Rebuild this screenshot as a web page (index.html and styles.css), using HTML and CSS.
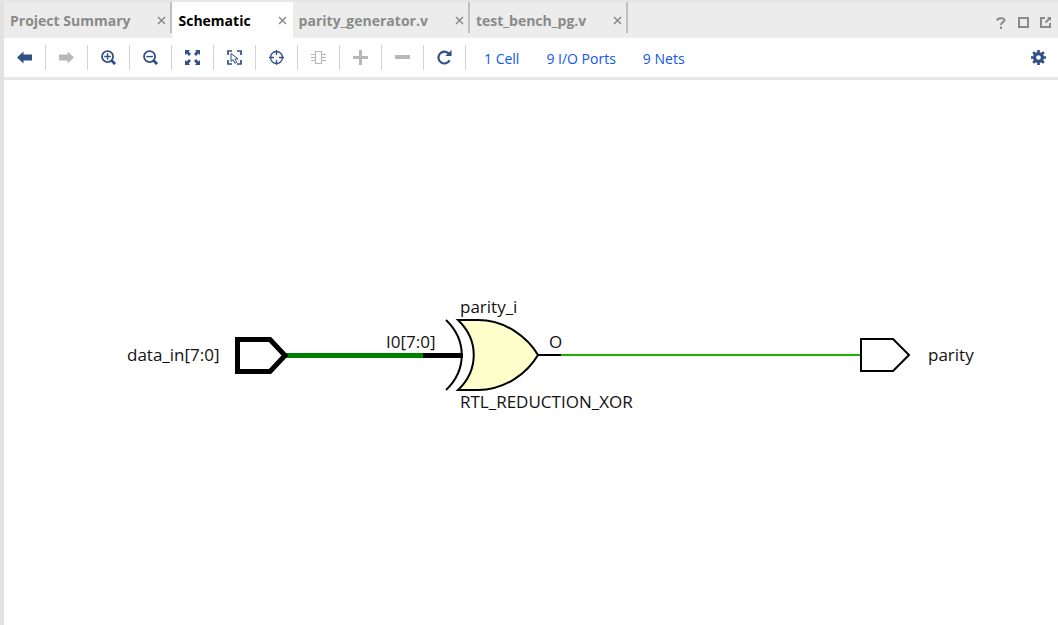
FILE: index.html
```html
<!DOCTYPE html>
<html lang="en">
<head>
<meta charset="utf-8">
<title>Schematic</title>
<link rel="stylesheet" href="styles.css">
</head>
<body>
<div class="panel">
  <header class="tabbar">
    <nav class="tabs">
      <div class="tab divided"><button class="tab-label">Project Summary</button><button class="close" aria-label="Close Project Summary"><svg width="9" height="9" viewBox="0 0 9 9"><path d="M1 1l7 7M8 1l-7 7"/></svg></button></div>
      <div class="tab active"><button class="tab-label">Schematic</button><button class="close" aria-label="Close Schematic"><svg width="9" height="9" viewBox="0 0 9 9"><path d="M1 1l7 7M8 1l-7 7"/></svg></button></div>
      <div class="tab divided"><button class="tab-label">parity_generator.v</button><button class="close" aria-label="Close parity_generator.v"><svg width="9" height="9" viewBox="0 0 9 9"><path d="M1 1l7 7M8 1l-7 7"/></svg></button></div>
      <div class="tab divided"><button class="tab-label">test_bench_pg.v</button><button class="close" aria-label="Close test_bench_pg.v"><svg width="9" height="9" viewBox="0 0 9 9"><path d="M1 1l7 7M8 1l-7 7"/></svg></button></div>
    </nav>
    <div class="window-actions">
      <button class="help" aria-label="Help"><svg width="10" height="12" viewBox="0 0 10 12"><path d="M1 3.500C1.500 .500 8.500 .300 8.500 3.300C8.500 5.300 5 5.200 5 8M5 9.500V12" fill="none" stroke="currentColor" stroke-width="2"/></svg></button>
      <button aria-label="Maximize"><svg width="12" height="12" viewBox="0 0 12 12"><path d="M1 1h9v9H1z" fill="none" stroke="currentColor" stroke-width="2"/></svg></button>
      <button aria-label="Float"><svg width="12" height="12" viewBox="0 0 12 12"><path d="M5 1H1v9h9V6" fill="none" stroke="currentColor" stroke-width="2"/><path d="M5.500 5.500l4-4" stroke="currentColor" stroke-width="2"/><path d="M7 0h4v4z" fill="currentColor"/></svg></button>
    </div>
  </header>
  <div class="toolbar">
    <button class="tool" aria-label="Back"><svg class="icon" viewBox="0 0 15 15"><path d="M0 7.500L6.500 1.500v3H15v6H6.500v3z" fill="currentColor"/></svg></button>
    <button class="tool" aria-label="Forward" disabled><svg class="icon" viewBox="0 0 15 15"><path d="M15 7.500L8.500 1.500v3H0v6h8.500v3z" fill="currentColor"/></svg></button>
    <button class="tool" aria-label="Zoom in"><svg class="icon" viewBox="0 0 16 16"><circle cx="7" cy="7" r="5.900" fill="none" stroke="currentColor" stroke-width="1.900"/><path d="M3.500 7h7M7 3.500v7" stroke="currentColor" stroke-width="1.500"/><path d="M11 11l4 4" stroke="currentColor" stroke-width="3"/></svg></button>
    <button class="tool" aria-label="Zoom out"><svg class="icon" viewBox="0 0 16 16"><circle cx="7" cy="7" r="5.900" fill="none" stroke="currentColor" stroke-width="1.900"/><path d="M3.500 7h7" stroke="currentColor" stroke-width="1.500"/><path d="M11 11l4 4" stroke="currentColor" stroke-width="3"/></svg></button>
    <button class="tool" aria-label="Zoom fit"><svg class="icon" viewBox="0 0 15 15"><path d="M0 0h5L3.600 1.600 6 4 4 6 1.600 3.600 0 5zM15 0v5l-1.600-1.400L11 6 9 4l2.400-2.400L10 0zM0 15v-5l1.600 1.400L4 9l2 2-2.400 2.400L5 15zM15 15h-5l1.400-1.600L9 11l2-2 2.400 2.400L15 10z" fill="currentColor"/></svg></button>
    <button class="tool" aria-label="Select area"><svg class="icon" viewBox="0 0 15 15"><path d="M5 1H1v4M10 1h4v4M1 10v4h4M14 10v4h-4" fill="none" stroke="currentColor" stroke-width="1.700"/><path d="M4 3.500v8l2.200-1.800 1.600 3.500 1.900-.8L8.100 9l2.900-.2z" fill="none" stroke="currentColor"/></svg></button>
    <button class="tool" aria-label="Center selection"><svg class="icon" viewBox="0 0 15 15"><circle cx="7.500" cy="7.500" r="6" fill="none" stroke="currentColor" stroke-width="1.300"/><path d="M7.500 0v5M7.500 10v5M0 7.500h5M10 7.500h5" stroke="currentColor" stroke-width="1.300"/></svg></button>
    <button class="tool" aria-label="Expand cell" disabled><svg class="icon" viewBox="0 0 15 15"><path d="M4.500 1.500h6v12h-6zM0 4.500h4.500M0 7.500h4.500M0 10.500h4.500M10.500 4.500H15M10.500 7.500H15M10.500 10.500H15" fill="none" stroke="currentColor" stroke-width="1.200"/></svg></button>
    <button class="tool" aria-label="Add" disabled><svg class="icon" viewBox="0 0 15 15"><path d="M0 7.500h15M7.500 0v15" stroke="currentColor" stroke-width="3"/></svg></button>
    <button class="tool" aria-label="Remove" disabled><svg class="icon" viewBox="0 0 15 15"><path d="M0 7h15" stroke="currentColor" stroke-width="4"/></svg></button>
    <button class="tool" aria-label="Regenerate"><svg class="icon" viewBox="0 0 16 16"><path d="M12.700 4A6.300 6.300 0 1 0 13.500 11" fill="none" stroke="currentColor" stroke-width="2.300"/><path d="M15.500 0v6.500H9z" fill="currentColor"/></svg></button>
    <div class="stats"><a href="#cells">1 Cell</a><a href="#ports">9 I/O Ports</a><a href="#nets">9 Nets</a></div>
    <button class="settings" aria-label="Settings"><svg class="icon" viewBox="0 0 16 16"><circle cx="8" cy="8" r="4.200" fill="none" stroke="currentColor" stroke-width="3.400"/><path d="M8 0v3M8 13v3M0 8h3M13 8h3M2.300 2.300l2 2M11.700 11.700l2 2M2.300 13.700l2-2M11.700 4.300l2-2" stroke="currentColor" stroke-width="2.800"/></svg></button>
  </div>
  <main class="canvas">
    <svg class="schematic" viewBox="4 80 1054 545" role="img" aria-label="Parity generator schematic">
      <path class="bus" d="M285 355.500H424"/>
      <path class="bus-pin" d="M423 355.500H463"/>
      <path class="port-bus" d="M237.500 339.500H270L285 355.500 270 371.500H237.500Z"/>
      <path class="outline" d="M446 320C467 340 467 370 446 390"/>
      <path class="gate" d="M458 320H478C506 320 528 338 538 355C528 372 506 390 478 390H458C479 370 479 340 458 320Z"/>
      <path class="outline" d="M538 355H562"/>
      <path class="net" d="M561 355H861"/>
      <path class="outline" d="M861 339H893L909 355 893 371H861Z"/>
      <text x="127" y="361">data_in[7:0]</text>
      <text x="386" y="348">I0[7:0]</text>
      <text x="460" y="313">parity_i</text>
      <text x="460" y="408">RTL_REDUCTION_XOR</text>
      <text x="549" y="348">O</text>
      <text x="928" y="361">parity</text>
    </svg>
  </main>
</div>
</body>
</html>
```
FILE: styles.css
```css
* { box-sizing: border-box; }
body { margin: 0; background: #fff; font-family: "Open Sans", "Noto Sans", sans-serif; }
button { border: 0; padding: 0; background: none; color: inherit; font: inherit; display: flex; align-items: center; justify-content: center; }
.panel { min-height: 100vh; border-top: 2px solid #e6e6e6; border-left: 4px solid #e2e2e2; }
.tabbar { display: flex; justify-content: space-between; height: 36px; background: #ececec; }
.tabs { display: flex; }
.tab { position: relative; display: flex; align-items: center; gap: 27px; padding: 0 6px; color: #8a8a8a; font-size: 14px; font-weight: 700; white-space: nowrap; }
.tab.active { background: #fff; color: #000; }
.tab.divided::after { content: ""; position: absolute; top: 0; right: 0; width: 2px; height: 31px; background: #bfbfbf; }
.close svg { fill: none; stroke: #858585; stroke-width: 1.4; }
.window-actions { display: flex; align-items: center; gap: 10px; padding: 5px 6px 0 0; color: #8a8a8a; }
.help { margin-right: 2px; }
.toolbar { display: flex; align-items: center; height: 42px; border-bottom: 3px solid #e6e6e6; color: #2f4f87; }
.tool { width: 42px; height: 25px; border-right: 1px solid #d4d4d4; }
.tool:disabled { color: #b8b8b8; }
.icon { width: 15px; height: 15px; }
.stats { display: flex; gap: 27px; padding: 1px 0 0 18px; font-size: 14px; white-space: nowrap; }
.stats a { color: #0f56ee; text-decoration: none; }
.settings { margin-left: auto; padding-right: 12px; }
.schematic { display: block; width: 100%; height: auto; fill: none; }
.schematic text { fill: #111; font-size: 17px; }
.outline { stroke: #000; stroke-width: 2; }
.gate { fill: #ffffcc; stroke: #000; stroke-width: 2; }
.port-bus { fill: #fff; stroke: #000; stroke-width: 5; }
.bus { stroke: #008000; stroke-width: 5; }
.bus-pin { stroke: #000; stroke-width: 5; }
.net { stroke: #1fb000; stroke-width: 2; }
```
